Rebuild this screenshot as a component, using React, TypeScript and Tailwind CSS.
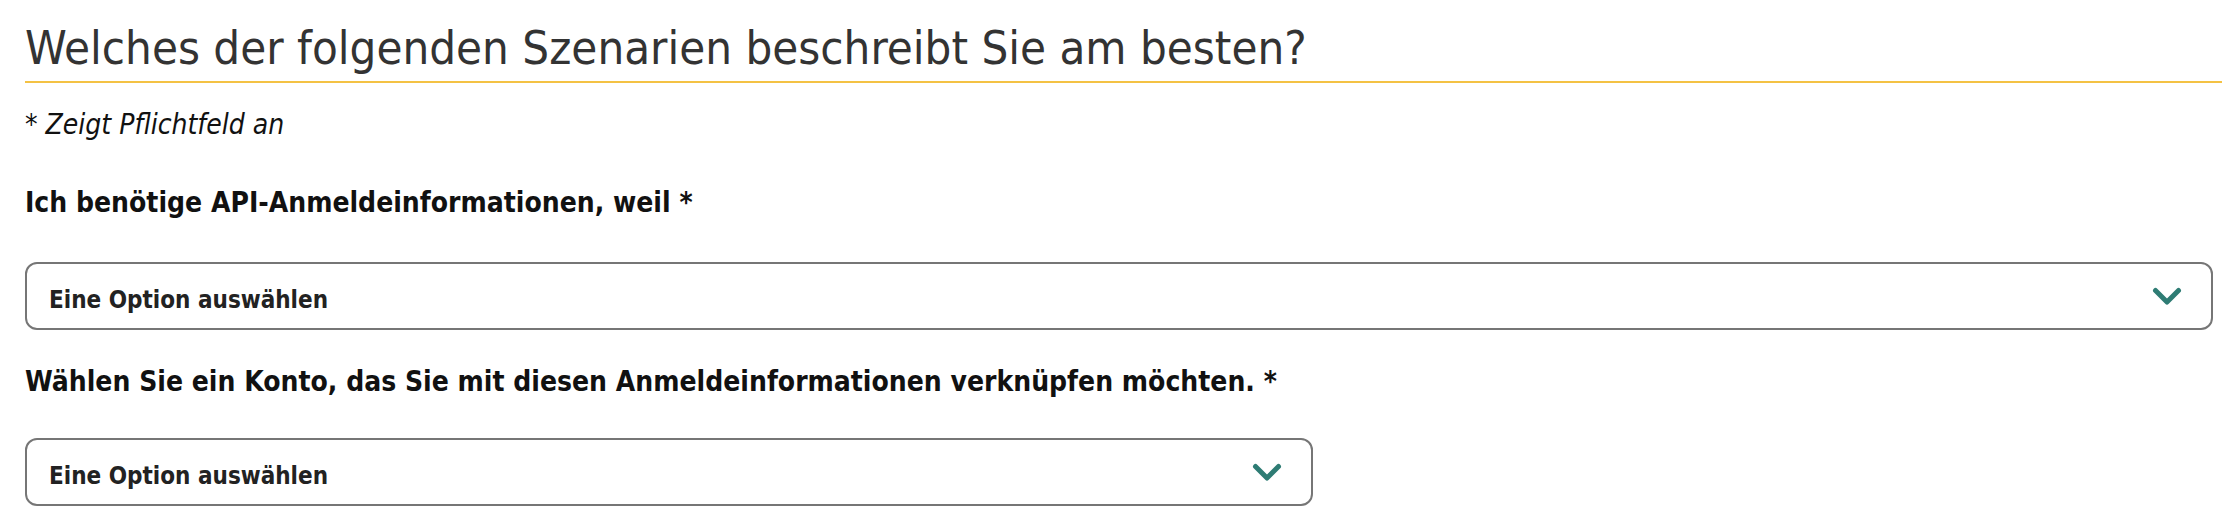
const fontStack = "font-['DejaVu_Sans_Condensed','DejaVu_Sans',sans-serif] font-stretch-condensed"

const Chevron = () => (
  <svg width="30" height="19" viewBox="0 0 30 19" fill="none" className="shrink-0">
    <path d="M3.5 3.5 L15 15 L26.5 3.5" stroke="#2e7c74" strokeWidth="5" strokeLinecap="round" strokeLinejoin="round" />
  </svg>
)

const SelectBox = ({ className = '' }: { className?: string }) => (
  <div
    className={`flex h-[68px] items-center justify-between rounded-[12px] border-2 border-[#767676] bg-white pl-[22px] pr-[29px] ${className}`}
  >
    <span className="pt-[7px] text-[24px] leading-[28px] font-bold text-[#222]">Eine Option auswählen</span>
    <Chevron />
  </div>
)

export default function App() {
  return (
    <main className={`min-h-[528px] bg-white pl-[25px] ${fontStack}`}>
      <h1 className="border-b-2 border-[#f4c244] pt-[20px] pb-[5px] text-[47px] leading-[56px] font-normal text-[#333]">
        Welches der folgenden Szenarien beschreibt Sie am besten?
      </h1>
      <p className="mt-[26px] text-[28px] leading-[32px] text-[#111] italic">* Zeigt Pflichtfeld an</p>

      <label className="mt-[46px] block text-[28px] leading-[32px] font-bold text-[#111]">
        Ich benötige API-Anmeldeinformationen, weil *
      </label>
      <SelectBox className="mt-[43px] mr-[9px]" />

      <label className="mt-[36px] block text-[28px] leading-[32px] font-bold text-[#111]">
        Wählen Sie ein Konto, das Sie mit diesen Anmeldeinformationen verknüpfen möchten. *
      </label>
      <SelectBox className="mt-[40px] w-[1288px]" />
    </main>
  )
}
